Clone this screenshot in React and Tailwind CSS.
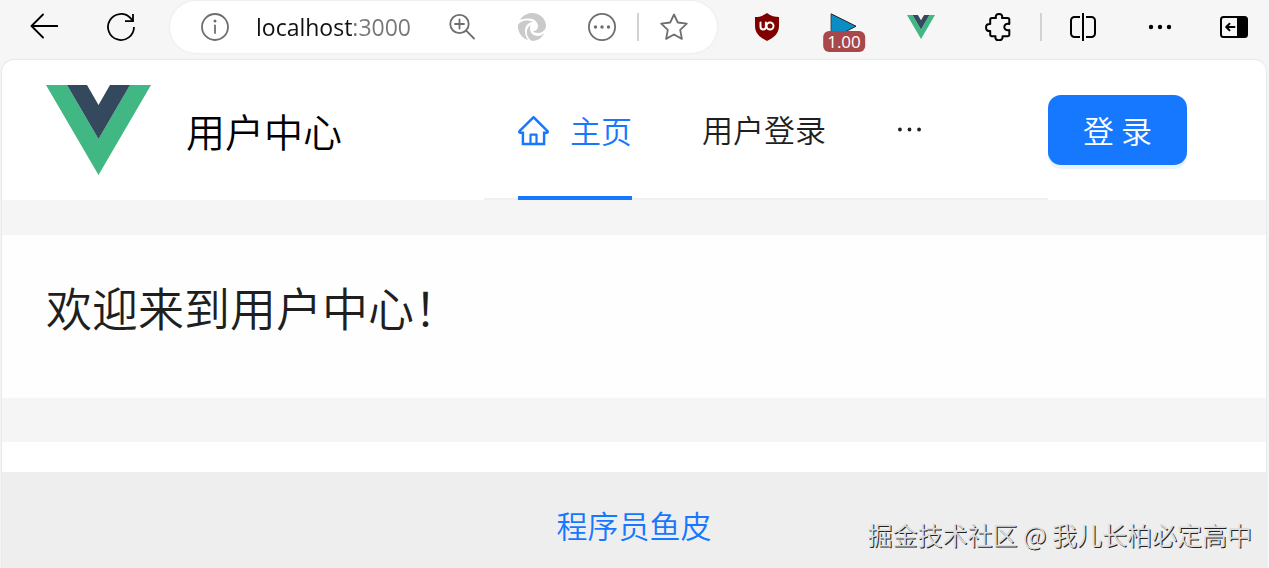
import { useState } from 'react';
import { AiOutlineHome, AiOutlineEllipsis } from 'react-icons/ai';

const VueLogo = ({ className }) => (
  <svg viewBox="0 0 105 90" className={className} aria-hidden="true">
    <path fill="#41b883" d="M0 0h21l31.500 54L84 0h21L52.500 90z" />
    <path fill="#34495e" d="M21 0h20l11.500 20L64 0h20L52.500 54z" />
  </svg>
);

const Icon = ({ children, className = 'size-7 text-black' }) => (
  <svg viewBox="0 0 28 28" className={className} fill="none" stroke="currentColor" strokeWidth="1.8" strokeLinecap="round" strokeLinejoin="round" aria-hidden="true">
    {children}
  </svg>
);

const GRAY = 'size-7 text-[#6e6e6e]';

const Toolbar = () => {
  const [url, setUrl] = useState('localhost:3000');

  return (
    <div className="flex items-center pt-px pb-1.5 pl-[30px] pr-[21px]">
      <div className="flex gap-[49px] mr-[35px]">
        <button aria-label="后退">
          <Icon><path d="M27.500 13H1.500M13 1.500L1.500 13 13 24.500" /></Icon>
        </button>
        <button aria-label="刷新">
          <Icon>
            <path d="M27 14A13 13 0 1 1 23.500 5.100L26 8" strokeLinecap="butt" />
            <path d="M26 1v7.200h-8" strokeLinecap="butt" strokeLinejoin="miter" />
          </Icon>
        </button>
      </div>

      <div className="flex-1 min-w-0 flex items-center h-[52px] pl-[31px] pr-[29px] bg-white rounded-full shadow-[0_0_3px_rgba(0,0,0,0.08)]">
        <button aria-label="网站信息" className="shrink-0">
          <Icon className={GRAY}>
            <circle cx="14" cy="14" r="13" />
            <path d="M14 12.500v7.500" />
            <circle cx="14" cy="8" r="1.500" fill="currentColor" stroke="none" />
          </Icon>
        </button>
        <input
          aria-label="地址栏"
          value={url}
          onChange={(e) => setUrl(e.target.value)}
          className="flex-1 min-w-0 ml-[27px] font-['Open_Sans',sans-serif] font-normal text-[23px] leading-9 outline-none text-transparent caret-black bg-clip-text bg-[linear-gradient(90deg,#111_96px,#767676_96px)]"
        />
        <div className="flex items-center shrink-0 gap-[42px]">
          <button aria-label="放大">
            <Icon className={GRAY}>
              <circle cx="11.500" cy="11" r="9.200" />
              <path d="M18.200 17.600L26 25.500M11.500 6.500v9M7 11h9" />
            </Icon>
          </button>
          <button aria-label="Edge">
            <Icon className="size-7 text-[#cacaca]">
              <g fill="currentColor" stroke="none">
                <path d="M2 7C5 2 10 0 14 0c8 0 13.500 6 14 12 .3 5-3.500 8-7.500 8-3 0-5-1-5.500-2 3 0 5-2 5-5 0-4-4-7.500-9-7.500-4 0-7 .5-9 1.500z" />
                <path d="M0 12c1.500-3 5-4.500 8.500-4.500 3 0 5 .5 6.500 1.500C9.500 9.500 7 13.500 7 18c0 3 1 6 3 9C4.500 25.500 0 20 0 14z" />
                <path d="M12.500 12C8.500 15 8 20 10 24c1 2 2.500 3.300 4 4 5.500 0 10-3 12.500-8-2.500 2.500-6 3.500-9.500 2.500-4-1-6-5.500-4.500-10.500z" />
              </g>
            </Icon>
          </button>
          <button aria-label="更多操作">
            <Icon className={GRAY}>
              <circle cx="14" cy="14" r="13.100" />
              <g fill="currentColor" stroke="none">
                <circle cx="7.500" cy="14" r="1.700" />
                <circle cx="14" cy="14" r="1.700" />
                <circle cx="20.500" cy="14" r="1.700" />
              </g>
            </Icon>
          </button>
        </div>
        <div className="w-0.5 h-7 mx-[21px] shrink-0 bg-[#d2d2d2]" />
        <button aria-label="收藏" className="shrink-0">
          <Icon className={GRAY}>
            <path d="M14 1.500l3.800 8 9 1.200-6.600 6.200 1.700 9L14 21.500 6.100 25.900l1.700-9L1.200 10.700l9-1.200z" />
          </Icon>
        </button>
      </div>

      <div className="flex items-center gap-[49px] ml-9">
        <button aria-label="uBlock Origin">
          <Icon>
            <path d="M14 0c4 3 8 4 12 4v9c0 8-6 12-12 15C8 25 2 21 2 13V4c4 0 8-1 12-4z" fill="#800000" stroke="none" />
            <path d="M7.500 9.500v4.300a2.700 2.700 0 0 0 5.400 0V9.500" stroke="#fff" strokeWidth="2" />
            <circle cx="17" cy="13" r="3.500" stroke="#fff" strokeWidth="2" />
          </Icon>
        </button>
        <button aria-label="播放速度" className="relative">
          <Icon>
            <path d="M1.500 1L26 13.200 1.500 26z" fill="#0b8cc4" stroke="#222" strokeWidth="1" />
          </Icon>
          <span className="absolute left-1/2 -translate-x-1/2 top-[18px] px-1 h-[21px] rounded-md bg-[#a8484b] text-white font-['Open_Sans',sans-serif] font-normal text-[17px] leading-[21px]">
            1.00
          </span>
        </button>
        <button aria-label="Vue.js devtools" className="size-7 flex items-center">
          <VueLogo className="w-7" />
        </button>
        <button aria-label="扩展">
          <Icon>
            <path strokeWidth="2" d="M8 5h4c-.8-2.500.5-4 3-4s3.800 1.500 3 4h5.500a1.800 1.800 0 0 1 1.800 1.800V11c-3-.8-5 .8-5 3s2 3.800 5 3v4.500a1.800 1.800 0 0 1-1.800 1.800H18.500c.5 2.500-1.200 4-3.700 4s-3.800-1.500-3.300-4H8a1.800 1.800 0 0 1-1.800-1.800V18C3.700 18.500 2 17 2 14.500s1.700-4 4.200-3.500V6.800A1.800 1.800 0 0 1 8 5z" />
          </Icon>
        </button>
      </div>
      <div className="w-0.5 h-7 mx-7 bg-[#d2d2d2]" />
      <div className="flex items-center gap-[47px]">
        <button aria-label="分屏">
          <Icon>
            <path d="M13 0v28" strokeWidth="2" strokeLinecap="butt" />
            <path strokeWidth="2" strokeLinecap="butt" d="M10 4H4.500A3.500 3.500 0 0 0 1 7.500v13A3.500 3.500 0 0 0 4.500 24H10M16 4h5.500A3.500 3.500 0 0 1 25 7.500v13a3.500 3.500 0 0 1-3.500 3.500H16" />
          </Icon>
        </button>
        <button aria-label="设置及其他">
          <Icon>
            <g fill="currentColor" stroke="none">
              <circle cx="6" cy="14" r="2.200" />
              <circle cx="15" cy="14" r="2.200" />
              <circle cx="24" cy="14" r="2.200" />
            </g>
          </Icon>
        </button>
        <button aria-label="侧边栏">
          <Icon>
            <rect x="1" y="4" width="26" height="20" rx="2.500" strokeWidth="2" />
            <path d="M17 4h8a2 2 0 0 1 2 2v16a2 2 0 0 1-2 2h-8z" fill="currentColor" stroke="none" />
            <path d="M14.500 14H6.500M9.500 10.800L6.200 14l3.300 3.200" strokeWidth="2" />
          </Icon>
        </button>
      </div>
    </div>
  );
};

const Header = () => (
  <header className="flex bg-white rounded-t-xl pl-11 pr-[79px] h-[140px]">
    <div className="flex items-center w-[438px] shrink-0">
      <VueLogo className="w-[105px]" />
      <span className="ml-[35px] text-[39px] text-black">用户中心</span>
    </div>
    <nav className="flex-1 min-w-0 flex items-stretch gap-[70px] px-[34px] border-b-2 border-[#f0f0f0] text-[31px] text-[#1f1f1f]">
      <a href="#home" className="flex items-center gap-[21px] -mb-0.5 border-y-4 border-t-transparent border-b-[#1677ff] text-[#1677ff]">
        <AiOutlineHome className="size-[35px] -mx-0.5" />
        主页
      </a>
      <a href="#login" className="flex items-center">用户登录</a>
      <button aria-label="更多">
        <AiOutlineEllipsis className="size-[35px] -mx-1" />
      </button>
    </nav>
    <button className="self-center h-[70px] px-[35px] rounded-[13px] bg-[#1677ff] text-white text-[31px] shadow-[0_4px_0_rgba(5,145,255,0.1)] whitespace-nowrap">
      登 录
    </button>
  </header>
);

const App = () => {
  return (
    <div className="min-h-screen flex flex-col bg-[#f6f6f6] font-['Noto_Sans_CJK_SC',sans-serif] font-[350]">
      <Toolbar />
      <div className="flex-1 flex flex-col ml-0.5 mr-[3px] mt-px rounded-t-xl bg-[#f5f5f5] shadow-[0_0_2px_rgba(0,0,0,0.2)]">
        <Header />
        <main className="mt-[35px] pt-[35px] pb-14 px-11 bg-[#fefefe]">
          <h1 className="font-[350] text-[46px] leading-[72px] text-[#1f1f1f]">欢迎来到用户中心！</h1>
        </main>
        <div className="mt-11 h-[30px] bg-white" />
        <footer className="relative flex-1 bg-[#eee] pt-[33px] pb-5 text-center">
          <a href="#author" className="text-[31px] leading-10 text-[#1677ff]">程序员鱼皮</a>
          <span className="absolute right-3.5 bottom-4 text-[25px] leading-9 text-[#ddd] [text-shadow:1px_1px_0_#222]">
            掘金技术社区 @ 我儿长柏必定高中
          </span>
        </footer>
      </div>
    </div>
  );
};

export default App;
